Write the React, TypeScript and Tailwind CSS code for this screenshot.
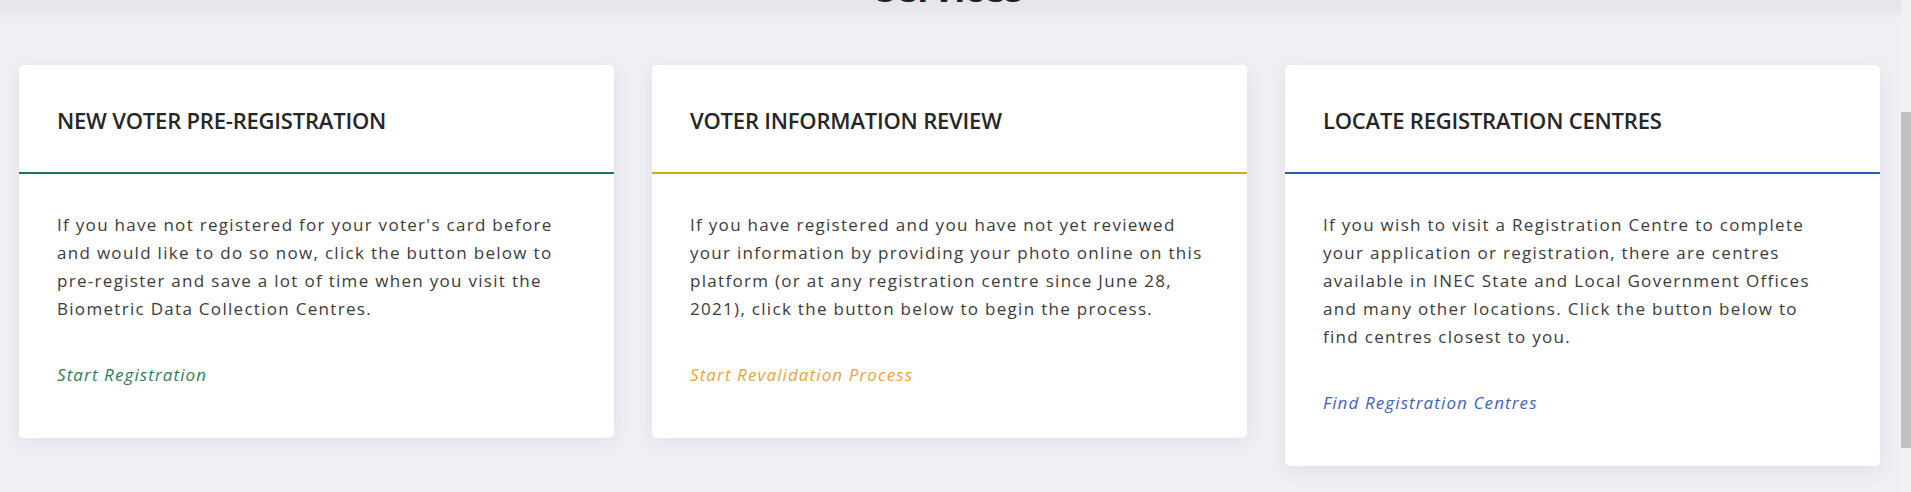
import React from "react";

type Service = {
  title: string;
  lines: string[];
  link: string;
  border: string;
  linkColor: string;
};

const services: Service[] = [
  {
    title: "NEW VOTER PRE-REGISTRATION",
    lines: [
      "If you have not registered for your voter's card before",
      "and would like to do so now, click the button below to",
      "pre-register and save a lot of time when you visit the",
      "Biometric Data Collection Centres.",
    ],
    link: "Start Registration",
    border: "border-[#137a55]",
    linkColor: "text-[#2f7c58]",
  },
  {
    title: "VOTER INFORMATION REVIEW",
    lines: [
      "If you have registered and you have not yet reviewed",
      "your information by providing your photo online on this",
      "platform (or at any registration centre since June 28,",
      "2021), click the button below to begin the process.",
    ],
    link: "Start Revalidation Process",
    border: "border-[#dfa21c]",
    linkColor: "text-[#e9a23f]",
  },
  {
    title: "LOCATE REGISTRATION CENTRES",
    lines: [
      "If you wish to visit a Registration Centre to complete",
      "your application or registration, there are centres",
      "available in INEC State and Local Government Offices",
      "and many other locations. Click the button below to",
      "find centres closest to you.",
    ],
    link: "Find Registration Centres",
    border: "border-[#1c60b5]",
    linkColor: "text-[#3d62be]",
  },
];

const ServiceCard: React.FC<{ item: Service }> = ({ item }) => {
  return (
    <div className="bg-white rounded-[5px] shadow-[0_4px_18px_rgba(30,35,60,0.08)]">
      <div className={`h-[109px] flex items-center px-[38px] border-b-2 ${item.border}`}>
        <h3 className="text-[22px] font-semibold text-[#262626] font-['Open_Sans',sans-serif] tracking-[-0.2px] mt-[3px]">
          {item.title}
        </h3>
      </div>
      <div className="pt-[37px] pb-[49px] pl-[38px] pr-[30px] font-['Open_Sans',sans-serif]">
        <p className="text-[17px] leading-[28px] text-[#3b3b3b] tracking-[1.3px]">
          {item.lines.map((l) => (
            <span key={l} className="block whitespace-nowrap">
              {l}
            </span>
          ))}
        </p>
        <a href="#" className={`block mt-[38px] text-[17px] leading-[28px] italic tracking-[1.1px] ${item.linkColor}`}>
          {item.link}
        </a>
      </div>
    </div>
  );
};

export default function App() {
  return (
    <div className="flex h-[492px] w-full overflow-hidden">
      <main className="flex-1 bg-[linear-gradient(to_bottom,#e3e4e8_0px,#eff0f4_22px)] pl-[19px] pr-[21px]">
        <h2 className="text-center text-[36px] leading-[36px] font-bold text-[#1f1f1f] font-['Open_Sans',sans-serif] -mt-[29px] mb-[58px]">
          Services
        </h2>
        <div className="grid grid-cols-3 gap-[38px] items-start">
          {services.map((s) => (
            <ServiceCard key={s.title} item={s} />
          ))}
        </div>
      </main>
      <div className="w-[10px] bg-[#f1f1f1] flex flex-col">
        <div className="h-[112px]" />
        <div className="h-[336px] bg-[#c1c1c1]" />
      </div>
    </div>
  );
}
